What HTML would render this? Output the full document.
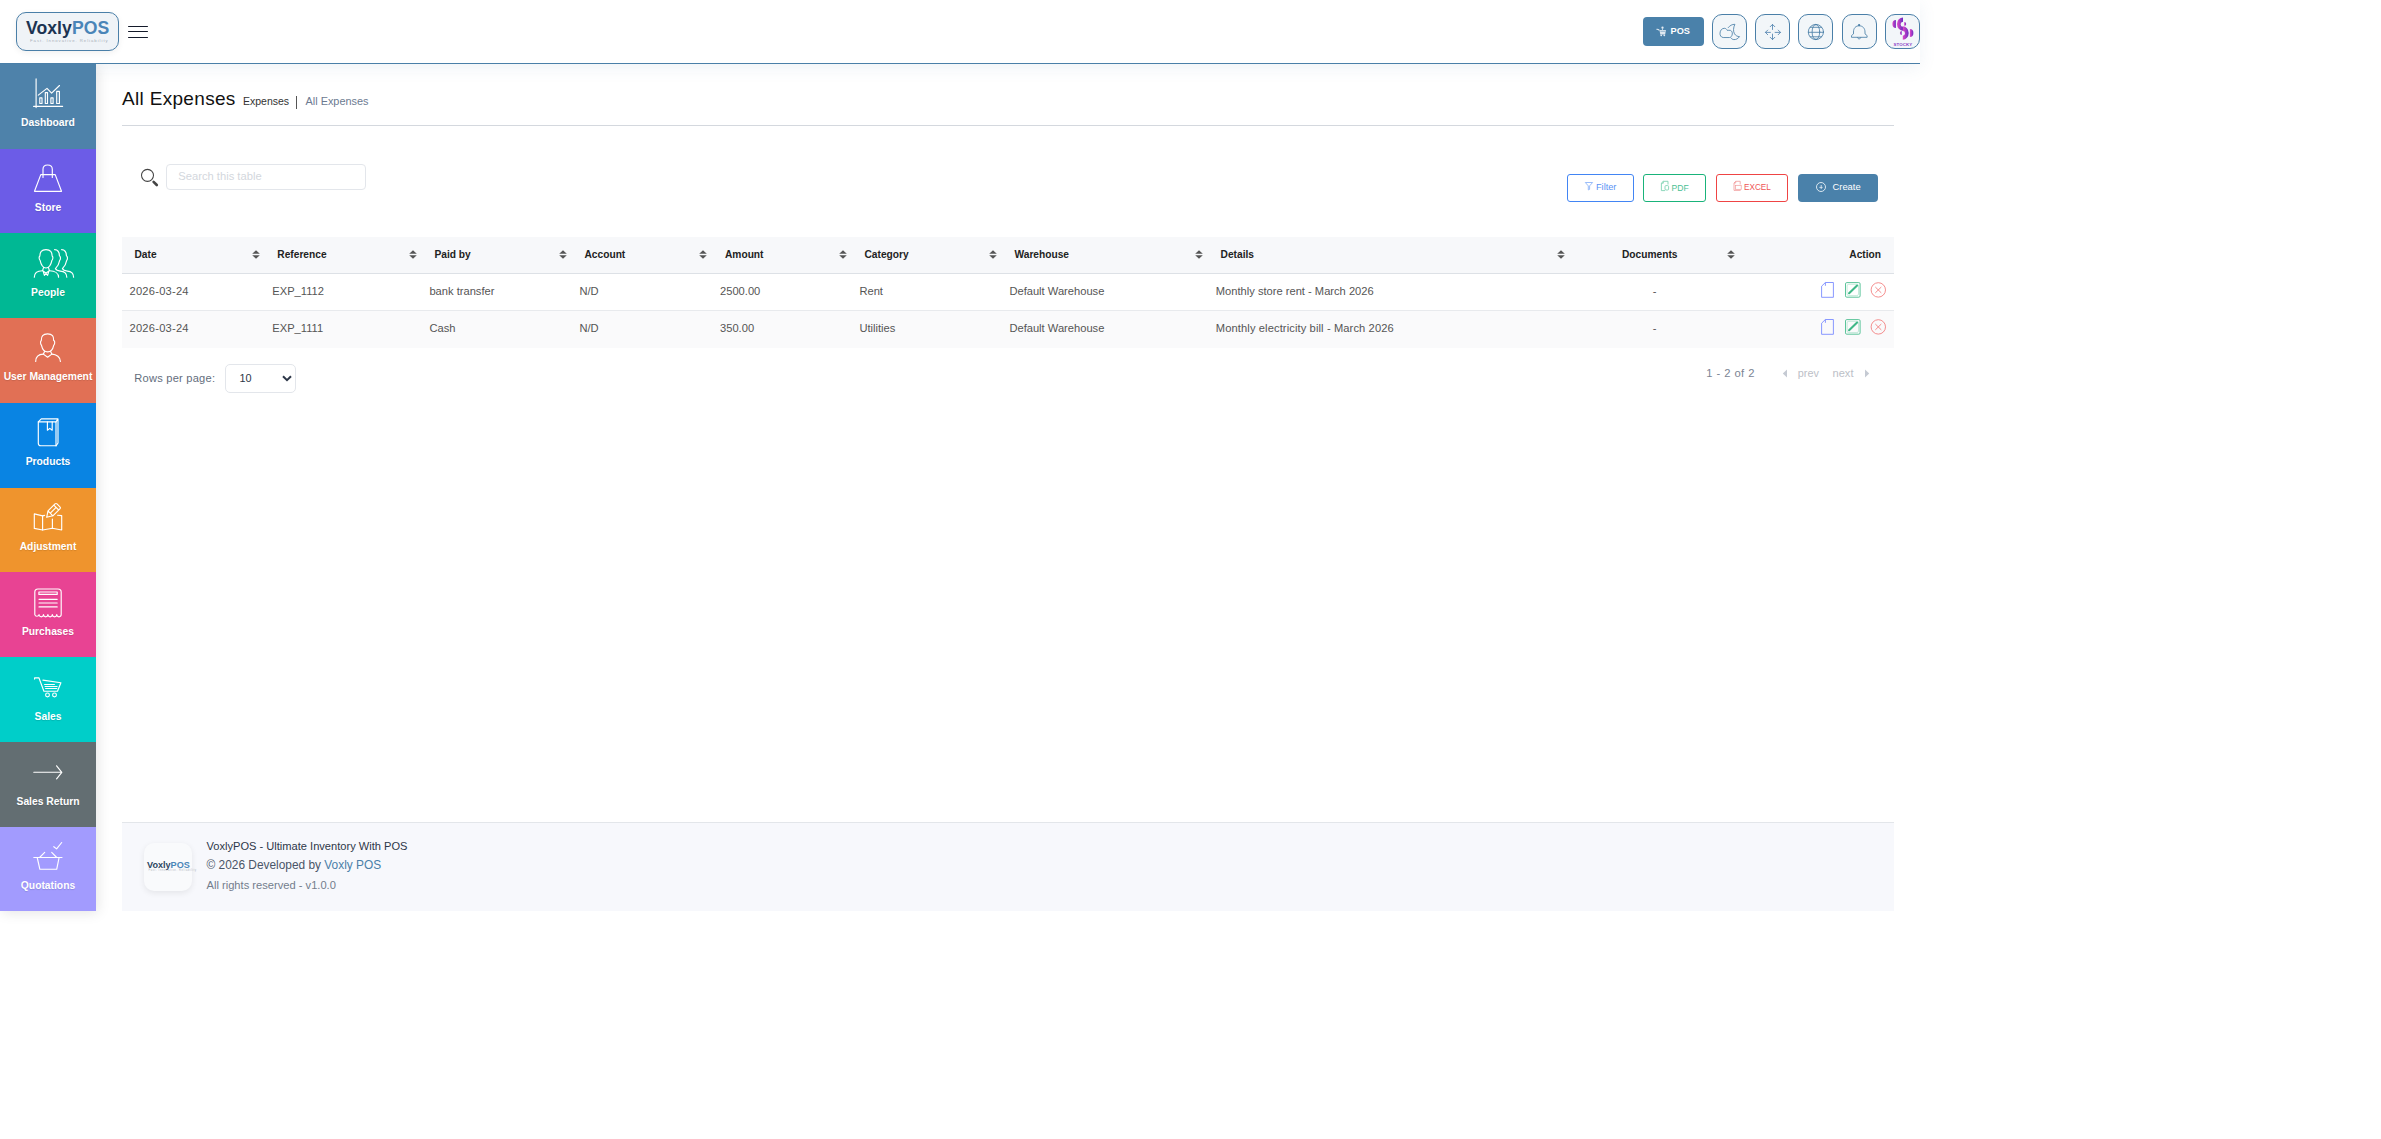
<!DOCTYPE html>
<html><head><meta charset="utf-8"><title>All Expenses</title>
<style>
html,body{margin:0;padding:0;background:#fff;width:2381px;height:1139px;overflow:hidden}
body{position:relative;font-family:"Liberation Sans", sans-serif}
.t{position:absolute;white-space:pre;font-family:"Liberation Sans", sans-serif}
.r{position:absolute;box-sizing:content-box}
svg.r{overflow:visible}
</style></head><body>
<div class="r" style="left:0px;top:0px;width:1920px;height:63px;background:#fff;border-bottom:1px solid #4a7fa8;box-shadow:0 4px 16px rgba(74,127,168,0.09);z-index:2"></div>
<div class="r" style="left:16px;top:12px;width:101px;height:37px;border:1px solid #4a7fa8;border-radius:10px;background:#eff3f7;box-shadow:0 2px 6px rgba(0,0,0,0.06);z-index:3"></div>
<div class="t" style="left:26px;top:19.5px;font-size:17.6px;line-height:17.6px;font-weight:700;z-index:4;letter-spacing:0.05px"><span style="color:#1c3452">Voxly</span><span style="color:#4a85b8">POS</span></div>
<div class="t" style="left:30px;top:39.0px;font-size:4.3px;line-height:4.3px;color:#aab1b9;letter-spacing:0.95px;z-index:4">Fast. Innovative. Reliability</div>
<div class="r" style="left:128px;top:25.9px;width:20px;height:1.2px;background:#141a2a;border-radius:1px;z-index:4"></div>
<div class="r" style="left:128px;top:30.9px;width:20px;height:1.2px;background:#141a2a;border-radius:1px;z-index:4"></div>
<div class="r" style="left:128px;top:36.9px;width:20px;height:1.2px;background:#141a2a;border-radius:1px;z-index:4"></div>
<div class="r" style="left:1643px;top:17px;width:61px;height:29px;background:#4a81aa;border-radius:4px;z-index:4"></div>
<svg class="r" style="left:1656px;top:26px;z-index:5" width="11" height="11" viewBox="0 0 11 11" fill="none"><path d="M0.8 3.3 C1.6 3.2 2.4 3.5 2.9 4" stroke="#e4ecf3" stroke-width="1.1" stroke-linecap="round"/><path d="M3.4 3.9 H9.9 L9.2 8.4 H4.3 Z" fill="#dfe8f0"/><path d="M4.4 5.3 H9.2" stroke="#4a81aa" stroke-width="0.5"/><circle cx="5.2" cy="9.3" r="0.9" fill="#e4ecf3"/><circle cx="8.3" cy="9.3" r="0.9" fill="#e4ecf3"/><circle cx="6.5" cy="1.7" r="1.15" fill="#e4ecf3"/><path d="M6.5 2.5 V3.9" stroke="#e4ecf3" stroke-width="0.8"/></svg>
<div class="t " style="left:1670.60px;top:27.11px;font-size:9.2px;line-height:9.2px;font-weight:700;color:#fff;z-index:5">POS</div>
<div class="r" style="left:1712px;top:14px;width:33px;height:33px;border:1px solid #4a7fa8;border-radius:10px;background:#f2f6f9;z-index:4"></div>
<div class="r" style="left:1755px;top:14px;width:33px;height:33px;border:1px solid #4a7fa8;border-radius:10px;background:#f2f6f9;z-index:4"></div>
<div class="r" style="left:1798px;top:14px;width:33px;height:33px;border:1px solid #4a7fa8;border-radius:10px;background:#f2f6f9;z-index:4"></div>
<div class="r" style="left:1842px;top:14px;width:33px;height:33px;border:1px solid #4a7fa8;border-radius:10px;background:#f2f6f9;z-index:4"></div>
<div class="r" style="left:1885px;top:14px;width:33px;height:33px;border:1px solid #4a7fa8;border-radius:10px;background:#f2f6f9;z-index:4"></div>
<svg class="r" style="left:1712px;top:14px;z-index:5" width="35" height="35" viewBox="0 0 35 35" fill="none"><path d="M10.8 23.5 C8.8 23.3 7.9 21.2 8 19.2 C8.1 16.3 10 14.3 12.3 14.3 C13.8 14.3 14.8 15.2 15.4 16.5 C16.2 16.3 17.4 16.1 18.5 16.4 C19.8 16.9 20.5 18.4 20.3 20 C20.1 22 19 23.4 17.8 23.5 Z" stroke="#4a7fa8" stroke-width="0.85" stroke-linecap="round" stroke-linejoin="round"/><path d="M16.2 13.6 C18 11.5 20 10.3 22.9 10.3 C21.3 13.5 21 17.5 22.5 19.8 C23.8 21.8 25.5 22.6 27.5 22.6 C26.2 24.7 24 25.7 21.8 25.6 C20.5 25.5 19.5 24.8 19 24" stroke="#4a7fa8" stroke-width="0.85" stroke-linecap="round" stroke-linejoin="round"/></svg>
<svg class="r" style="left:1755px;top:14px;z-index:5" width="35" height="35" viewBox="0 0 35 35" fill="none"><path d="M17.5 10.4 V15.5 M17.5 20.1 V25.6 M10.4 18.4 H15.4 M20.1 18.4 H25.5 M15.2 12.7 L17.5 10.4 L19.8 12.7 M15.2 23.3 L17.5 25.6 L19.8 23.3 M12.7 16.1 L10.4 18.4 L12.7 20.7 M23.2 16.1 L25.5 18.4 L23.2 20.7" stroke="#5a8ab3" stroke-width="0.9" stroke-linecap="round" stroke-linejoin="round"/></svg>
<svg class="r" style="left:1798px;top:14px;z-index:5" width="35" height="35" viewBox="0 0 35 35" fill="none"><circle cx="17.9" cy="18" r="7.6" stroke="#4a7fa8" stroke-width="0.85" stroke-linecap="round" stroke-linejoin="round"/><ellipse cx="17.9" cy="18" rx="3.8" ry="7.6" stroke="#4a7fa8" stroke-width="0.85" stroke-linecap="round" stroke-linejoin="round"/><path d="M10.3 18.3 H25.5 M12.2 13.3 H23.6 M12.2 22.8 H23.6 M17.9 10.4 V11.2 M17.9 24.8 V25.6" stroke="#4a7fa8" stroke-width="0.85" stroke-linecap="round" stroke-linejoin="round"/></svg>
<svg class="r" style="left:1842px;top:14px;z-index:5" width="35" height="35" viewBox="0 0 35 35" fill="none"><path d="M17.1 11.7 C13.5 11.7 11.5 14.4 11.5 18 V19.9 L9.5 21.6 V23.3 H25.1 V21.6 L23 19.9 V18 C23 14.4 20.8 11.7 17.1 11.7 Z" stroke="#4a7fa8" stroke-width="0.85" stroke-linecap="round" stroke-linejoin="round"/><path d="M15.5 23.6 C15.7 25.4 18.6 25.4 18.8 23.6" stroke="#4a7fa8" stroke-width="0.85" stroke-linecap="round" stroke-linejoin="round"/><circle cx="17.1" cy="11" r="1.1" fill="#4a7fa8"/></svg>
<svg class="r" style="left:1885px;top:14px;z-index:5" width="35" height="35" viewBox="0 0 35 35" fill="none"><defs><linearGradient id="g1" x1="0" y1="0" x2="1" y2="0"><stop offset="0" stop-color="#e048c8"/><stop offset="1" stop-color="#6a2cc0"/></linearGradient></defs><path d="M10.9 6 A3.5 4.05 0 0 0 10.9 14.1 Z" fill="url(#g1)"/><path d="M18 3.4 A6 6.65 0 0 0 18 16.7 L18 12.8 A2.4 2.5 0 0 1 18 7.8 Z" fill="url(#g1)"/><path d="M17.8 12.3 A5.9 6.75 0 0 1 17.8 25.8 L17.8 21.7 A2.2 2.4 0 0 0 17.8 16.9 Z" fill="url(#g1)"/><path d="M19.2 8.1 A2 1.85 0 0 1 19.2 11.8 Z" fill="url(#g1)"/><path d="M16.7 17 A1.8 2 0 0 0 16.7 21 Z" fill="url(#g1)"/><path d="M24.9 15 A3.5 4 0 0 1 24.9 23 Z" fill="url(#g1)"/><text x="17.9" y="31.7" font-size="4.4" font-weight="700" fill="#8b3fc7" text-anchor="middle" font-family="Liberation Sans" letter-spacing="0.1">STOCKY</text></svg>
<div class="r" style="left:0px;top:64px;width:96px;height:847px;box-shadow:2px 2px 12px rgba(0,0,0,0.10);z-index:1;background:#fff"></div>
<div class="r" style="left:0;top:63.80px;width:96px;height:85.17px;background:#4e82aa;z-index:2"></div>
<svg class="r" style="left:0;top:0;z-index:3" width="96" height="911" viewBox="0 0 96 911" fill="none"><g transform="translate(0 64)"><path d="M36.1 14.9 V43.6 M33.6 42.4 H62.6" stroke="#fff" stroke-width="1.15" stroke-linecap="round" stroke-linejoin="round"/><path d="M38.3 31.1 L47 24.4 L51.6 29.1 L59.5 21.5" stroke="#fff" stroke-width="1.15" stroke-linecap="round" stroke-linejoin="round"/><rect x="39.8" y="33.9" width="2.2" height="5.6" stroke="#fff" stroke-width="1.15" stroke-linecap="round" stroke-linejoin="round"/><rect x="45.3" y="28.6" width="2.2" height="10.9" stroke="#fff" stroke-width="1.15" stroke-linecap="round" stroke-linejoin="round"/><rect x="50.9" y="33.9" width="2.2" height="5.6" stroke="#fff" stroke-width="1.15" stroke-linecap="round" stroke-linejoin="round"/><rect x="56.7" y="27.4" width="2.7" height="12.1" stroke="#fff" stroke-width="1.15" stroke-linecap="round" stroke-linejoin="round"/></g></svg>
<div class="t" style="left:0;width:96px;text-align:center;top:117.88px;font-size:10.3px;line-height:10.3px;font-weight:700;color:#fff;z-index:3;text-shadow:0 1px 1px rgba(0,0,0,0.12)">Dashboard</div>
<div class="r" style="left:0;top:148.57px;width:96px;height:85.17px;background:#6c5ce7;z-index:2"></div>
<svg class="r" style="left:0;top:0;z-index:3" width="96" height="911" viewBox="0 0 96 911" fill="none"><g transform="translate(0 148.7)"><path d="M34.5 42.6 L61.5 42.6 L55.2 25.9 H40.8 Z" stroke="#fff" stroke-width="1.15" stroke-linecap="round" stroke-linejoin="round"/><path d="M43 28.8 V20.6 C43 17.6 45.2 16.3 47.6 16.3 C50 16.3 52.3 17.6 52.3 20.6 V28.8" stroke="#fff" stroke-width="1.15" stroke-linecap="round" stroke-linejoin="round"/></g></svg>
<div class="t" style="left:0;width:96px;text-align:center;top:202.71px;font-size:10.3px;line-height:10.3px;font-weight:700;color:#fff;z-index:3;text-shadow:0 1px 1px rgba(0,0,0,0.12)">Store</div>
<div class="r" style="left:0;top:233.34px;width:96px;height:85.17px;background:#00b894;z-index:2"></div>
<svg class="r" style="left:0;top:0;z-index:3" width="96" height="911" viewBox="0 0 96 911" fill="none"><g transform="translate(0 233.4)"><path d="M46 16.2 C41.5 16.2 39.8 18.6 39.9 22.6 C38.8 23.2 38.9 26 40.1 27 C41 31.4 43.2 34.5 46 34.6 C48.8 34.5 51 31.4 51.9 27 C53.1 26 53.2 23.2 52.1 22.6 C52.2 18.6 50.5 16.2 46 16.2 Z" stroke="#fff" stroke-width="1.15" stroke-linecap="round" stroke-linejoin="round"/><path d="M43.6 34 L42.6 37.3 M48.4 34 L49.4 37.3 M42.6 37.3 L46 39.6 L49.4 37.3 M43.4 38.6 L44.4 42 L46 40 L47.6 42 L48.6 38.6" stroke="#fff" stroke-width="1.15" stroke-linecap="round" stroke-linejoin="round"/><path d="M34.3 43.9 C34.3 40 37 37.5 42.4 37.4 M49.6 37.4 C55 37.5 58.6 40 58.6 43.9" stroke="#fff" stroke-width="1.15" stroke-linecap="round" stroke-linejoin="round"/><path d="M54.6 16.2 C57.6 16.2 59.3 18.3 59.4 22.3 C60.7 23 60.8 25.8 59.7 26.9 C59 30.8 57.4 33.4 55.4 35.2 C56.2 37 57.3 37.6 60.3 37.7 C64 37.9 66.8 40.2 66.8 43.9" stroke="#fff" stroke-width="1.15" stroke-linecap="round" stroke-linejoin="round"/><path d="M61.6 16.2 C64.6 16.2 66.3 18.3 66.4 22.3 C67.7 23 67.8 25.8 66.7 26.9 C66 30.8 64.4 33.4 62.4 35.2 C63.2 37 64.3 37.6 67.3 37.7 C71 37.9 73.6 40.2 73.6 43.9" stroke="#fff" stroke-width="1.15" stroke-linecap="round" stroke-linejoin="round"/></g></svg>
<div class="t" style="left:0;width:96px;text-align:center;top:287.54px;font-size:10.3px;line-height:10.3px;font-weight:700;color:#fff;z-index:3;text-shadow:0 1px 1px rgba(0,0,0,0.12)">People</div>
<div class="r" style="left:0;top:318.11px;width:96px;height:85.17px;background:#e17055;z-index:2"></div>
<svg class="r" style="left:0;top:0;z-index:3" width="96" height="911" viewBox="0 0 96 911" fill="none"><g transform="translate(0 318.1)"><path d="M47.6 15.8 C42.8 15.8 41.2 18.2 41.3 22.4 C40.2 23.2 40.3 26.2 41.5 27.2 C42.3 31 44.6 33.7 47.6 33.8 C50.6 33.7 52.9 31 53.7 27.2 C54.9 26.3 55 23.6 54.2 22.6 L53.6 22.3 C53.9 18.2 52.4 15.8 47.6 15.8 Z" stroke="#fff" stroke-width="1.15" stroke-linecap="round" stroke-linejoin="round"/><path d="M44.6 33.4 L43.4 36 L47.6 39.1 L51.8 36 L50.6 33.4" stroke="#fff" stroke-width="1.15" stroke-linecap="round" stroke-linejoin="round"/><path d="M35.7 43.3 C35.7 39 38.6 36.2 43.4 36 M51.8 36 C56.6 36.2 60.4 39 60.4 43.3" stroke="#fff" stroke-width="1.15" stroke-linecap="round" stroke-linejoin="round"/></g></svg>
<div class="t" style="left:0;width:96px;text-align:center;top:372.37px;font-size:10.3px;line-height:10.3px;font-weight:700;color:#fff;z-index:3;text-shadow:0 1px 1px rgba(0,0,0,0.12)">User Management</div>
<div class="r" style="left:0;top:402.88px;width:96px;height:85.17px;background:#0984e3;z-index:2"></div>
<svg class="r" style="left:0;top:0;z-index:3" width="96" height="911" viewBox="0 0 96 911" fill="none"><g transform="translate(0 402.8)"><path d="M38.3 19.1 H56 V43 H40.8 C39.3 43 38.3 42 38.3 40.5 Z" stroke="#fff" stroke-width="1.15" stroke-linecap="round" stroke-linejoin="round"/><path d="M38.3 19.1 L41.3 16.1 H58 V40.2 L56 43 M56 19.1 L58 16.1" stroke="#fff" stroke-width="1.15" stroke-linecap="round" stroke-linejoin="round"/><path d="M47.4 19.1 V27.4 L49.8 25.6 L52.2 27.4 V19.1" stroke="#fff" stroke-width="1.15" stroke-linecap="round" stroke-linejoin="round"/></g></svg>
<div class="t" style="left:0;width:96px;text-align:center;top:457.20px;font-size:10.3px;line-height:10.3px;font-weight:700;color:#fff;z-index:3;text-shadow:0 1px 1px rgba(0,0,0,0.12)">Products</div>
<div class="r" style="left:0;top:487.65px;width:96px;height:85.17px;background:#ef942d;z-index:2"></div>
<svg class="r" style="left:0;top:0;z-index:3" width="96" height="911" viewBox="0 0 96 911" fill="none"><g transform="translate(0 487.5)"><path d="M44.6 27.9 L42.6 28.4 L34.3 26.4 V40.9 L42.6 42.5 L52.4 40.8 L61.7 42.5 V28.1 L57.6 27.8" stroke="#fff" stroke-width="1.15" stroke-linecap="round" stroke-linejoin="round"/><path d="M42.6 28.4 V42.5 M52.4 31.5 V40.8" stroke="#fff" stroke-width="1.15" stroke-linecap="round" stroke-linejoin="round"/><path d="M46.7 29.8 L48 23.4 L55 16.4 C55.6 15.8 56.4 15.8 57 16.4 L59.9 19.3 C60.5 19.9 60.5 20.7 59.9 21.3 L52.9 28.3 Z M48 23.4 L52.9 28.3 M54.3 18.1 L58.2 22 M50.6 25.4 L55.9 20.1" stroke="#fff" stroke-width="1.15" stroke-linecap="round" stroke-linejoin="round"/></g></svg>
<div class="t" style="left:0;width:96px;text-align:center;top:542.03px;font-size:10.3px;line-height:10.3px;font-weight:700;color:#fff;z-index:3;text-shadow:0 1px 1px rgba(0,0,0,0.12)">Adjustment</div>
<div class="r" style="left:0;top:572.42px;width:96px;height:85.17px;background:#e84393;z-index:2"></div>
<svg class="r" style="left:0;top:0;z-index:3" width="96" height="911" viewBox="0 0 96 911" fill="none"><g transform="translate(0 572.2)"><path d="M34.8 42.4 V20 C34.8 17.9 35.9 16.8 38 16.8 H58 C60.1 16.8 61.2 17.9 61.2 20 V42.4 A2.2 2.2 0 0 1 56.77 42.4 A2.2 2.2 0 0 1 52.34 42.4 A2.2 2.2 0 0 1 47.9 42.4 A2.2 2.2 0 0 1 43.47 42.4 A2.2 2.2 0 0 1 39.04 42.4 A2.2 2.2 0 0 1 34.8 42.4 Z" stroke="#fff" stroke-width="1.15" stroke-linecap="round" stroke-linejoin="round"/><rect x="38.9" y="19.8" width="18.3" height="2.4" stroke="#fff" stroke-width="1.15" stroke-linecap="round" stroke-linejoin="round"/><path d="M39 27.1 H57.2 M39 30.8 H57.2 M39 34.7 H57.2" stroke="#fff" stroke-width="1.15" stroke-linecap="round" stroke-linejoin="round"/></g></svg>
<div class="t" style="left:0;width:96px;text-align:center;top:626.86px;font-size:10.3px;line-height:10.3px;font-weight:700;color:#fff;z-index:3;text-shadow:0 1px 1px rgba(0,0,0,0.12)">Purchases</div>
<div class="r" style="left:0;top:657.19px;width:96px;height:85.17px;background:#00cec9;z-index:2"></div>
<svg class="r" style="left:0;top:0;z-index:3" width="96" height="911" viewBox="0 0 96 911" fill="none"><g transform="translate(0 656.9)"><path d="M34.6 22.2 V20.9 H38.9 L43.9 34.3 H57.5 L60.9 25.9 L42.9 23.2" stroke="#fff" stroke-width="1.15" stroke-linecap="round" stroke-linejoin="round"/><path d="M44.6 27.6 H54.4 M45.1 29.6 H57.1 M45.6 31.6 H56.8" stroke="#fff" stroke-width="1.15" stroke-linecap="round" stroke-linejoin="round"/><circle cx="47.5" cy="38" r="1.9" stroke="#fff" stroke-width="1.15" stroke-linecap="round" stroke-linejoin="round"/><circle cx="54.5" cy="38" r="1.9" stroke="#fff" stroke-width="1.15" stroke-linecap="round" stroke-linejoin="round"/></g></svg>
<div class="t" style="left:0;width:96px;text-align:center;top:711.69px;font-size:10.3px;line-height:10.3px;font-weight:700;color:#fff;z-index:3;text-shadow:0 1px 1px rgba(0,0,0,0.12)">Sales</div>
<div class="r" style="left:0;top:741.96px;width:96px;height:85.17px;background:#636e72;z-index:2"></div>
<svg class="r" style="left:0;top:0;z-index:3" width="96" height="911" viewBox="0 0 96 911" fill="none"><g transform="translate(0 741.6)"><path d="M33.8 30.7 H61.8 M56.6 24.2 L61.8 30.7 L56.6 37.2" stroke="#fff" stroke-width="1.15" stroke-linecap="round" stroke-linejoin="round"/></g></svg>
<div class="t" style="left:0;width:96px;text-align:center;top:796.52px;font-size:10.3px;line-height:10.3px;font-weight:700;color:#fff;z-index:3;text-shadow:0 1px 1px rgba(0,0,0,0.12)">Sales Return</div>
<div class="r" style="left:0;top:826.73px;width:96px;height:84.27px;background:#a29bfe;z-index:2"></div>
<svg class="r" style="left:0;top:0;z-index:3" width="96" height="911" viewBox="0 0 96 911" fill="none"><g transform="translate(0 826.3)"><path d="M33.8 31.2 H62 M37.2 31.2 L39.9 43 H56.7 L59.1 31.2 M39.6 31.2 L44.7 26.1 M51.7 26.1 L56.7 31.2 M53.8 20.4 L56.6 22.6 L61.7 16.2" stroke="#fff" stroke-width="1.15" stroke-linecap="round" stroke-linejoin="round"/></g></svg>
<div class="t" style="left:0;width:96px;text-align:center;top:881.35px;font-size:10.3px;line-height:10.3px;font-weight:700;color:#fff;z-index:3;text-shadow:0 1px 1px rgba(0,0,0,0.12)">Quotations</div>
<div class="t " style="left:122.00px;top:88.62px;font-size:19.0px;line-height:19.0px;font-weight:400;color:#111;letter-spacing:0.32px">All Expenses</div>
<div class="t " style="left:243.00px;top:95.81px;font-size:10.5px;line-height:10.5px;font-weight:400;color:#333;">Expenses</div>
<div class="r" style="left:296px;top:96px;width:1px;height:13px;background:#555"></div>
<div class="t " style="left:305.50px;top:96.07px;font-size:10.9px;line-height:10.9px;font-weight:400;color:#6c7a91;">All Expenses</div>
<div class="r" style="left:122px;top:125px;width:1772px;height:1px;background:#d4d8de"></div>
<svg class="r" style="left:139px;top:167px;" width="21" height="21" viewBox="0 0 21 21" fill="none"><circle cx="8.5" cy="8.35" r="6" stroke="#444" stroke-width="1.05"/><path d="M14.6 14.8 L17.8 18" stroke="#444" stroke-width="2.6" stroke-linecap="round"/></svg>
<div class="r" style="left:166px;top:164px;width:198px;height:24px;border:1px solid #e3e6eb;border-radius:4px;background:#fff"></div>
<div class="t " style="left:178.30px;top:170.52px;font-size:11.2px;line-height:11.2px;font-weight:400;color:#d3d7dd;">Search this table</div>
<div class="r" style="left:1567px;top:174px;width:65px;height:26px;border:1px solid #4285f4;border-radius:3px"></div>
<svg class="r" style="left:1584px;top:181px;" width="10" height="10" viewBox="0 0 10 10" fill="none"><path d="M1.3 1.5 H8.6 L5.6 4.9 V8.4 L4.3 8.9 V4.9 Z" stroke="#8fb6f8" stroke-width="0.9" stroke-linejoin="round"/></svg>
<div class="t " style="left:1596.00px;top:183.01px;font-size:9.2px;line-height:9.2px;font-weight:400;color:#5b93f5;">Filter</div>
<div class="r" style="left:1643px;top:174px;width:61px;height:26px;border:1px solid #19b37a;border-radius:3px"></div>
<svg class="r" style="left:1660px;top:180px;" width="10" height="12" viewBox="0 0 10 12" fill="none"><path d="M1.4 3.2 L3.3 1.3 H8 V4.5 M5 10.6 H1.4 V3.2 H3.3 V1.3" stroke="#7fd3b2" stroke-width="0.9"/><rect x="5" y="5.6" width="3.6" height="4.4" rx="1" stroke="#7fd3b2" stroke-width="0.9"/></svg>
<div class="t " style="left:1671.50px;top:183.52px;font-size:8.6px;line-height:8.6px;font-weight:400;color:#4cbf93;">PDF</div>
<div class="r" style="left:1716px;top:174px;width:70px;height:26px;border:1px solid #ef4444;border-radius:3px"></div>
<svg class="r" style="left:1733px;top:180px;" width="10" height="12" viewBox="0 0 10 12" fill="none"><path d="M1 3 L2.7 1.3 H7.2 V4.4 M7.6 10.4 H1 V3 H2.7 V1.3" stroke="#f19a9a" stroke-width="0.8"/><rect x="2.6" y="5.3" width="5.6" height="4" stroke="#f19a9a" stroke-width="0.7"/></svg>
<div class="t " style="left:1744.00px;top:183.86px;font-size:8.2px;line-height:8.2px;font-weight:400;color:#ef5555;">EXCEL</div>
<div class="r" style="left:1798px;top:174px;width:80px;height:28px;background:#4a81aa;border-radius:4px"></div>
<svg class="r" style="left:1815px;top:181px;" width="12" height="12" viewBox="0 0 12 12" fill="none"><circle cx="6" cy="6" r="4.5" stroke="#e8f0f6" stroke-width="0.9"/><path d="M6.2 4 V8 M4.4 6.4 H7.6" stroke="#e8f0f6" stroke-width="0.8"/></svg>
<div class="t " style="left:1832.50px;top:181.84px;font-size:9.4px;line-height:9.4px;font-weight:400;color:#fff;">Create</div>
<div class="r" style="left:122px;top:237px;width:1772px;height:36px;background:#f7f8fa"></div>
<div class="r" style="left:122px;top:273px;width:1772px;height:1px;background:#dde1e6"></div>
<div class="r" style="left:122px;top:274px;width:1772px;height:36px;background:#fff"></div>
<div class="r" style="left:122px;top:310px;width:1772px;height:1px;background:#e8eaed"></div>
<div class="r" style="left:122px;top:311px;width:1772px;height:37px;background:#fafafb"></div>
<div class="t " style="left:134.50px;top:249.57px;font-size:10.2px;line-height:10.2px;font-weight:700;color:#222;">Date</div>
<svg class="r" style="left:252px;top:250px;" width="8" height="9" viewBox="0 0 8 9" fill="none"><path d="M4 0.3 L7.8 3.8 H0.2 Z M4 8.7 L7.8 5.2 H0.2 Z" fill="#555"/></svg>
<div class="t " style="left:277.30px;top:249.57px;font-size:10.2px;line-height:10.2px;font-weight:700;color:#222;">Reference</div>
<svg class="r" style="left:409px;top:250px;" width="8" height="9" viewBox="0 0 8 9" fill="none"><path d="M4 0.3 L7.8 3.8 H0.2 Z M4 8.7 L7.8 5.2 H0.2 Z" fill="#555"/></svg>
<div class="t " style="left:434.50px;top:249.57px;font-size:10.2px;line-height:10.2px;font-weight:700;color:#222;">Paid by</div>
<svg class="r" style="left:559px;top:250px;" width="8" height="9" viewBox="0 0 8 9" fill="none"><path d="M4 0.3 L7.8 3.8 H0.2 Z M4 8.7 L7.8 5.2 H0.2 Z" fill="#555"/></svg>
<div class="t " style="left:584.50px;top:249.57px;font-size:10.2px;line-height:10.2px;font-weight:700;color:#222;">Account</div>
<svg class="r" style="left:699px;top:250px;" width="8" height="9" viewBox="0 0 8 9" fill="none"><path d="M4 0.3 L7.8 3.8 H0.2 Z M4 8.7 L7.8 5.2 H0.2 Z" fill="#555"/></svg>
<div class="t " style="left:725.00px;top:249.57px;font-size:10.2px;line-height:10.2px;font-weight:700;color:#222;">Amount</div>
<svg class="r" style="left:839px;top:250px;" width="8" height="9" viewBox="0 0 8 9" fill="none"><path d="M4 0.3 L7.8 3.8 H0.2 Z M4 8.7 L7.8 5.2 H0.2 Z" fill="#555"/></svg>
<div class="t " style="left:864.50px;top:249.57px;font-size:10.2px;line-height:10.2px;font-weight:700;color:#222;">Category</div>
<svg class="r" style="left:989px;top:250px;" width="8" height="9" viewBox="0 0 8 9" fill="none"><path d="M4 0.3 L7.8 3.8 H0.2 Z M4 8.7 L7.8 5.2 H0.2 Z" fill="#555"/></svg>
<div class="t " style="left:1014.50px;top:249.57px;font-size:10.2px;line-height:10.2px;font-weight:700;color:#222;">Warehouse</div>
<svg class="r" style="left:1195px;top:250px;" width="8" height="9" viewBox="0 0 8 9" fill="none"><path d="M4 0.3 L7.8 3.8 H0.2 Z M4 8.7 L7.8 5.2 H0.2 Z" fill="#555"/></svg>
<div class="t " style="left:1220.60px;top:249.57px;font-size:10.2px;line-height:10.2px;font-weight:700;color:#222;">Details</div>
<svg class="r" style="left:1557px;top:250px;" width="8" height="9" viewBox="0 0 8 9" fill="none"><path d="M4 0.3 L7.8 3.8 H0.2 Z M4 8.7 L7.8 5.2 H0.2 Z" fill="#555"/></svg>
<div class="t " style="left:1622.00px;top:249.57px;font-size:10.2px;line-height:10.2px;font-weight:700;color:#222;">Documents</div>
<svg class="r" style="left:1727px;top:250px;" width="8" height="9" viewBox="0 0 8 9" fill="none"><path d="M4 0.3 L7.8 3.8 H0.2 Z M4 8.7 L7.8 5.2 H0.2 Z" fill="#555"/></svg>
<div class="t " style="left:1849.30px;top:249.57px;font-size:10.2px;line-height:10.2px;font-weight:700;color:#222;">Action</div>
<div class="t " style="left:129.50px;top:285.66px;font-size:11.15px;line-height:11.15px;font-weight:400;color:#555;letter-spacing:0.23px">2026-03-24</div>
<div class="t " style="left:272.30px;top:285.66px;font-size:11.15px;line-height:11.15px;font-weight:400;color:#555;">EXP_1112</div>
<div class="t " style="left:429.40px;top:285.66px;font-size:11.15px;line-height:11.15px;font-weight:400;color:#555;">bank transfer</div>
<div class="t " style="left:579.40px;top:285.66px;font-size:11.15px;line-height:11.15px;font-weight:400;color:#555;">N/D</div>
<div class="t " style="left:720.00px;top:285.66px;font-size:11.15px;line-height:11.15px;font-weight:400;color:#555;">2500.00</div>
<div class="t " style="left:859.40px;top:285.66px;font-size:11.15px;line-height:11.15px;font-weight:400;color:#555;">Rent</div>
<div class="t " style="left:1009.40px;top:285.66px;font-size:11.15px;line-height:11.15px;font-weight:400;color:#555;">Default Warehouse</div>
<div class="t " style="left:1215.80px;top:285.66px;font-size:11.15px;line-height:11.15px;font-weight:400;color:#555;">Monthly store rent - March 2026</div>
<div class="t " style="left:1652.80px;top:285.66px;font-size:11.15px;line-height:11.15px;font-weight:400;color:#555;">-</div>
<svg class="r" style="left:1820px;top:282px;" width="15" height="17" viewBox="0 0 15 17" fill="none"><path d="M1.6 4.2 L5.4 0.5 H13.4 V15.3 H1.6 Z M5.4 0.5 V3.8" stroke="#7b8cff" stroke-width="0.9"/></svg>
<svg class="r" style="left:1844px;top:282px;" width="18" height="17" viewBox="0 0 18 17" fill="none"><rect x="1.5" y="0.6" width="14.6" height="14.6" rx="1.3" stroke="#5cc49a" stroke-width="1"/><rect x="3.1" y="2.3" width="11.4" height="11.3" rx="1.6" stroke="#8fd8b8" stroke-width="0.5"/><path d="M5.1 11.2 L13.1 3.6" stroke="#3fb888" stroke-width="2.1" stroke-linecap="round"/></svg>
<svg class="r" style="left:1869px;top:282px;" width="18" height="17" viewBox="0 0 18 17" fill="none"><circle cx="9.3" cy="7.9" r="7.2" stroke="#f27a7a" stroke-width="0.85"/><path d="M6.3 5 L12.3 10.9 M12.3 5 L6.3 10.9" stroke="#f27a7a" stroke-width="0.85"/></svg>
<div class="t " style="left:129.50px;top:322.76px;font-size:11.15px;line-height:11.15px;font-weight:400;color:#555;letter-spacing:0.23px">2026-03-24</div>
<div class="t " style="left:272.30px;top:322.76px;font-size:11.15px;line-height:11.15px;font-weight:400;color:#555;">EXP_1111</div>
<div class="t " style="left:429.40px;top:322.76px;font-size:11.15px;line-height:11.15px;font-weight:400;color:#555;">Cash</div>
<div class="t " style="left:579.40px;top:322.76px;font-size:11.15px;line-height:11.15px;font-weight:400;color:#555;">N/D</div>
<div class="t " style="left:720.00px;top:322.76px;font-size:11.15px;line-height:11.15px;font-weight:400;color:#555;">350.00</div>
<div class="t " style="left:859.40px;top:322.76px;font-size:11.15px;line-height:11.15px;font-weight:400;color:#555;">Utilities</div>
<div class="t " style="left:1009.40px;top:322.76px;font-size:11.15px;line-height:11.15px;font-weight:400;color:#555;">Default Warehouse</div>
<div class="t " style="left:1215.80px;top:322.76px;font-size:11.15px;line-height:11.15px;font-weight:400;color:#555;letter-spacing:0.11px">Monthly electricity bill - March 2026</div>
<div class="t " style="left:1652.80px;top:322.76px;font-size:11.15px;line-height:11.15px;font-weight:400;color:#555;">-</div>
<svg class="r" style="left:1820px;top:319px;" width="15" height="17" viewBox="0 0 15 17" fill="none"><path d="M1.6 4.2 L5.4 0.5 H13.4 V15.3 H1.6 Z M5.4 0.5 V3.8" stroke="#7b8cff" stroke-width="0.9"/></svg>
<svg class="r" style="left:1844px;top:319px;" width="18" height="17" viewBox="0 0 18 17" fill="none"><rect x="1.5" y="0.6" width="14.6" height="14.6" rx="1.3" stroke="#5cc49a" stroke-width="1"/><rect x="3.1" y="2.3" width="11.4" height="11.3" rx="1.6" stroke="#8fd8b8" stroke-width="0.5"/><path d="M5.1 11.2 L13.1 3.6" stroke="#3fb888" stroke-width="2.1" stroke-linecap="round"/></svg>
<svg class="r" style="left:1869px;top:319px;" width="18" height="17" viewBox="0 0 18 17" fill="none"><circle cx="9.3" cy="7.9" r="7.2" stroke="#f27a7a" stroke-width="0.85"/><path d="M6.3 5 L12.3 10.9 M12.3 5 L6.3 10.9" stroke="#f27a7a" stroke-width="0.85"/></svg>
<div class="t " style="left:134.30px;top:373.20px;font-size:11.1px;line-height:11.1px;font-weight:400;color:#636d7c;letter-spacing:0.23px">Rows per page:</div>
<div class="r" style="left:225px;top:364px;width:69px;height:27px;border:1px solid #e3e6eb;border-radius:5px;background:#fff"></div>
<div class="t " style="left:239.50px;top:372.57px;font-size:10.9px;line-height:10.9px;font-weight:400;color:#2d3748;">10</div>
<svg class="r" style="left:282px;top:375px;" width="10" height="7" viewBox="0 0 10 7" fill="none"><path d="M1 1.2 L5 5.2 L9 1.2" stroke="#2d3748" stroke-width="2"/></svg>
<div class="t " style="left:1706.30px;top:368.12px;font-size:11.2px;line-height:11.2px;font-weight:400;color:#7b8494;letter-spacing:0.44px">1 - 2 of 2</div>
<svg class="r" style="left:1782px;top:369px;" width="6" height="9" viewBox="0 0 6 9" fill="none"><path d="M5 0.5 V8.5 L0.8 4.5 Z" fill="#c5cad3"/></svg>
<div class="t " style="left:1797.80px;top:368.42px;font-size:10.85px;line-height:10.85px;font-weight:400;color:#bcc0c7;">prev</div>
<div class="t " style="left:1832.50px;top:368.20px;font-size:11.1px;line-height:11.1px;font-weight:400;color:#bcc0c7;">next</div>
<svg class="r" style="left:1864px;top:369px;" width="6" height="9" viewBox="0 0 6 9" fill="none"><path d="M1 0.5 V8.5 L5.2 4.5 Z" fill="#c5cad3"/></svg>
<div class="r" style="left:122px;top:822px;width:1772px;height:89px;background:#f7f8fc;border-top:1px solid #e3e6ea;box-sizing:border-box"></div>
<div class="r" style="left:144px;top:843px;width:48px;height:48px;background:#f9fafc;border-radius:10px;box-shadow:0 2px 6px rgba(0,0,0,0.08)"></div>
<div class="t" style="left:147px;top:861px;font-size:9.1px;line-height:9.1px;font-weight:700"><span style="color:#2c4560">Voxly</span><span style="color:#4a85b8">POS</span></div>
<div class="t" style="left:148.5px;top:869.6px;font-size:2.6px;line-height:2.6px;color:#b0b5bc;letter-spacing:0.6px">Fast. Innovative. Reliability</div>
<div class="t " style="left:206.50px;top:840.60px;font-size:11.1px;line-height:11.1px;font-weight:400;color:#2d3748;">VoxlyPOS - Ultimate Inventory With POS</div>
<div class="t" style="left:206.5px;top:860.33px;font-size:11.9px;line-height:11.9px;color:#4a5568">© 2026 Developed by <span style="color:#4a7fa8">Voxly POS</span></div>
<div class="t " style="left:206.50px;top:879.66px;font-size:11.15px;line-height:11.15px;font-weight:400;color:#737d8c;">All rights reserved - v1.0.0</div>
</body></html>
